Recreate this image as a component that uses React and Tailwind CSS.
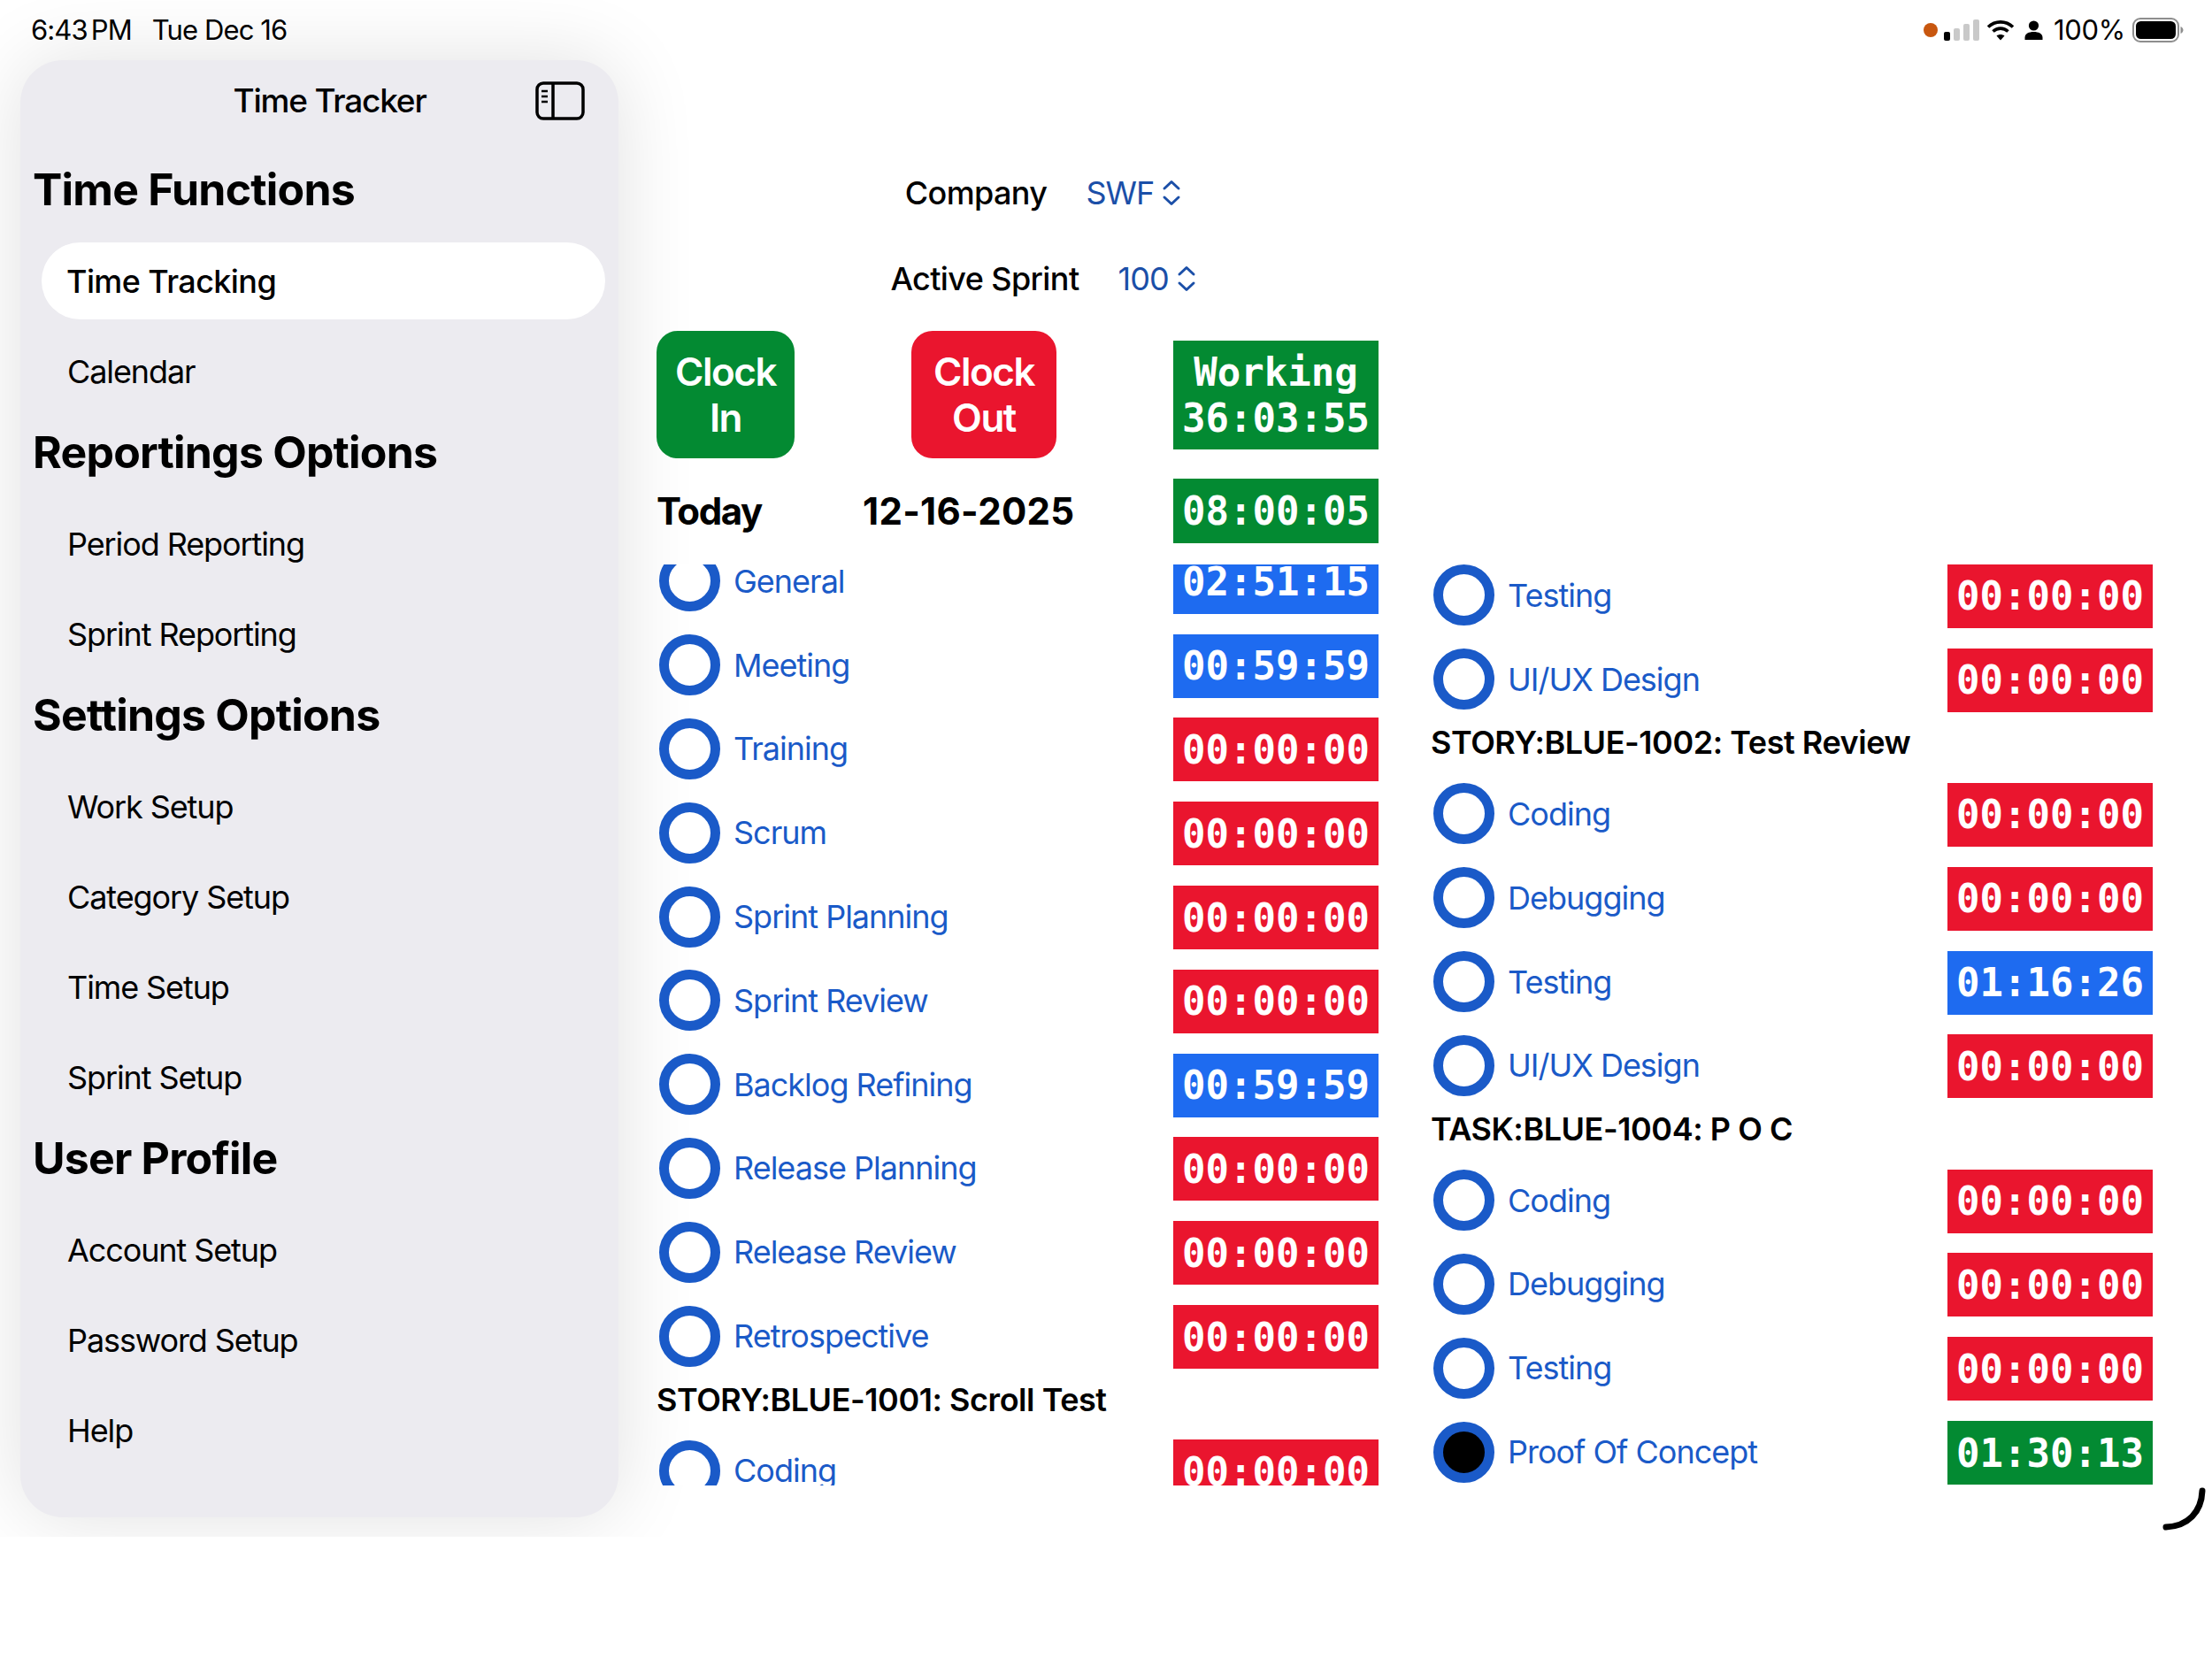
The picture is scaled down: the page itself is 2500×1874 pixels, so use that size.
const sections = [
  { title: "Time Functions", items: ["Time Tracking", "Calendar"] },
  { title: "Reportings Options", items: ["Period Reporting", "Sprint Reporting"] },
  { title: "Settings Options", items: ["Work Setup", "Category Setup", "Time Setup", "Sprint Setup"] },
  { title: "User Profile", items: ["Account Setup", "Password Setup", "Help"] },
];

const timerColors = {
  red: "bg-[#ea152e]",
  blue: "bg-[#1e6bf0]",
  green: "bg-[#038a32]",
};

const leftColumn = [
  { name: "General", time: "02:51:15", color: "blue" },
  { name: "Meeting", time: "00:59:59", color: "blue" },
  { name: "Training", time: "00:00:00", color: "red" },
  { name: "Scrum", time: "00:00:00", color: "red" },
  { name: "Sprint Planning", time: "00:00:00", color: "red" },
  { name: "Sprint Review", time: "00:00:00", color: "red" },
  { name: "Backlog Refining", time: "00:59:59", color: "blue" },
  { name: "Release Planning", time: "00:00:00", color: "red" },
  { name: "Release Review", time: "00:00:00", color: "red" },
  { name: "Retrospective", time: "00:00:00", color: "red" },
  { heading: "STORY:BLUE-1001: Scroll Test" },
  { name: "Coding", time: "00:00:00", color: "red" },
];

const rightColumn = [
  { name: "Testing", time: "00:00:00", color: "red" },
  { name: "UI/UX Design", time: "00:00:00", color: "red" },
  { heading: "STORY:BLUE-1002: Test Review" },
  { name: "Coding", time: "00:00:00", color: "red" },
  { name: "Debugging", time: "00:00:00", color: "red" },
  { name: "Testing", time: "01:16:26", color: "blue" },
  { name: "UI/UX Design", time: "00:00:00", color: "red" },
  { heading: "TASK:BLUE-1004: P O C" },
  { name: "Coding", time: "00:00:00", color: "red" },
  { name: "Debugging", time: "00:00:00", color: "red" },
  { name: "Testing", time: "00:00:00", color: "red" },
  { name: "Proof Of Concept", time: "01:30:13", color: "green", active: true },
];

function Timer({ color, className, children }) {
  return (
    <div
      className={`w-[232px] shrink-0 flex flex-col items-center justify-center pt-[1px] text-white text-[44px] leading-[52px] font-bold [font-family:'DejaVu_Sans_Mono',monospace] ${timerColors[color]} ${className}`}
    >
      {children}
    </div>
  );
}

function Row({ row }) {
  if (row.heading) {
    return (
      <div className="h-[57.5px] pb-[11px] flex items-center text-[36px] font-semibold text-black whitespace-nowrap tracking-[-0.45px]">
        {row.heading}
      </div>
    );
  }
  return (
    <div className="h-[94.8px] flex items-center justify-between">
      <div className="flex items-center gap-[15px] pl-[3px] mt-[-2px]">
        <div className={`w-[69px] h-[69px] rounded-full border-[11px] border-[#1a5ac8] ${row.active ? "bg-black" : "bg-white"}`} />
        <span className="text-[36px] text-[#1a5ac8] tracking-[-1px]">{row.name}</span>
      </div>
      <Timer color={row.color} className="h-[72px]">{row.time}</Timer>
    </div>
  );
}

function UpDown() {
  return (
    <svg width="22" height="30" viewBox="0 0 22 30" fill="none" stroke="#1b4fa8" strokeWidth="3" strokeLinecap="round" strokeLinejoin="round">
      <path d="M3 10 L11 2.5 L19 10" />
      <path d="M3 20 L11 27.5 L19 20" />
    </svg>
  );
}

function Picker({ label, value }) {
  return (
    <div className="h-[60px] flex items-center justify-center text-[36px]">
      <span className="font-medium text-black mr-[44px] tracking-[-0.6px]">{label}</span>
      <span className="text-[#1b4fa8] mr-[9px] tracking-[-1px]">{value}</span>
      <UpDown />
    </div>
  );
}

function SidebarIcon() {
  return (
    <svg width="56" height="44" viewBox="0 0 56 44" fill="none" stroke="#000">
      <rect x="2" y="2" width="52" height="40" rx="7" strokeWidth="3.5" />
      <path d="M20 2 V42" strokeWidth="3.5" />
      <path d="M7 11 H14 M7 17 H14 M7 23 H14" strokeWidth="2.5" />
    </svg>
  );
}

function StatusBar() {
  return (
    <div className="h-[68px] flex items-center justify-between pl-[35px] pr-[32px] text-[31px] text-black">
      <div className="flex items-center tracking-[-0.9px]">
        <span>6:43</span>
        <span className="ml-[4px] mr-[23px]">PM</span>
        <span>Tue Dec 16</span>
      </div>
      <div className="flex items-center">
        <div className="w-[16px] h-[16px] rounded-full bg-[#c8570f] mr-[7px]" />
        <svg width="40" height="24" viewBox="0 0 40 24" className="mr-[8px]">
          <rect x="0" y="14" width="7" height="10" rx="2" fill="#000" />
          <rect x="11" y="10" width="7" height="14" rx="2" fill="#c9c9c9" />
          <rect x="22" y="5" width="7" height="19" rx="2" fill="#c9c9c9" />
          <rect x="33" y="0" width="7" height="24" rx="2" fill="#c9c9c9" />
        </svg>
        <svg width="32" height="24" viewBox="0 0 32 24" fill="none" stroke="#000" strokeWidth="3.6" className="mr-[11px]">
          <path d="M2 8.5 C10 1 22 1 30 8.5" />
          <path d="M7.5 13.5 C12.5 9 19.5 9 24.5 13.5" />
          <path d="M16 23.5 L11.5 18.5 C14 16.5 18 16.5 20.5 18.5 Z" fill="#000" stroke="none" />
        </svg>
        <svg width="21" height="22" viewBox="0 0 21 22" fill="#000" className="mr-[12px]">
          <circle cx="10.5" cy="6" r="5.6" />
          <path d="M0.5 22 V19.5 C0.5 15 5 13 10.5 13 C16 13 20.5 15 20.5 19.5 V22 Z" />
        </svg>
        <span className="mr-[8px] tracking-[-0.3px]">100%</span>
        <svg width="58" height="28" viewBox="0 0 58 28">
          <rect x="1" y="1" width="51" height="26" rx="8" fill="none" stroke="#8e8e8e" strokeWidth="2" />
          <rect x="4" y="4" width="45" height="20" rx="5.5" fill="#000" />
          <path d="M54.5 10 C56.5 11 57.5 12.5 57.5 14 C57.5 15.5 56.5 17 54.5 18 Z" fill="#8e8e8e" />
        </svg>
      </div>
    </div>
  );
}

function Sidebar() {
  return (
    <aside className="ml-[23px] w-[676px] h-[1647px] shrink-0 rounded-[48px] bg-[#ecebf0] shadow-[0_0_90px_rgba(0,0,0,0.12)]">
      <div className="relative h-[92px] mb-[6px] flex items-center justify-center">
        <span className="ml-[23px] text-[37px] font-medium text-black tracking-[-1.2px]">Time Tracker</span>
        <div className="absolute left-[582px] top-[24px]">
          <SidebarIcon />
        </div>
      </div>
      {sections.map((section) => (
        <div key={section.title}>
          <h2 className="h-[96px] flex items-center pl-[14px] text-[50px] font-bold text-black tracking-[-0.8px]">
            {section.title}
          </h2>
          <div className="mt-[12px] flex flex-col gap-[15px]">
            {section.items.map((item) => (
              <div
                key={item}
                className={`ml-[24px] w-[637px] h-[87px] rounded-full flex items-center ${
                  item === "Time Tracking"
                    ? "bg-white pl-[28px] text-[36px] font-medium text-black tracking-[-0.6px]"
                    : "pt-[1px] pl-[29px] text-[36px] text-black tracking-[-1.1px]"
                }`}
              >
                {item}
              </div>
            ))}
          </div>
        </div>
      ))}
    </aside>
  );
}

export default function App() {
  return (
    <div className="relative h-[1737px] overflow-hidden bg-white [font-family:Inter,sans-serif]">
      <StatusBar />
      <div className="flex">
        <Sidebar />
        <main className="ml-[43px] w-[1691px]">
          <div className="w-[874px] pt-[120px]">
            <Picker label="Company" value="SWF" />
            <div className="mt-[37px]">
              <Picker label="Active Sprint" value="100" />
            </div>
          </div>
          <div className="w-[816px] mt-[29px] flex items-center">
            <button className="w-[156px] h-[144px] rounded-[24px] bg-[#038a32] text-white text-[44px] leading-[52px] font-semibold tracking-[-1.5px]">
              Clock<br />In
            </button>
            <button className="ml-[132px] w-[164px] h-[144px] rounded-[24px] bg-[#ea152e] text-white text-[44px] leading-[52px] font-semibold tracking-[-1.5px]">
              Clock<br />Out
            </button>
            <Timer color="green" className="ml-auto h-[123px]">
              <span>Working</span>
              <span>36:03:55</span>
            </Timer>
          </div>
          <div className="w-[816px] mt-[23px] flex items-center text-[42px] font-bold text-black">
            <span className="w-[233px] tracking-[-1.4px]">Today</span>
            <span className="tracking-[0.3px]">12-16-2025</span>
            <Timer color="green" className="ml-auto h-[73px]">08:00:05</Timer>
          </div>
          <div className="mt-[24px] h-[1041px] flex gap-[59px] overflow-hidden">
            <div className="w-[816px] shrink-0">
              <div className="mt-[-27.5px]">
                {leftColumn.map((row, i) => <Row key={i} row={row} />)}
              </div>
            </div>
            <div className="w-[816px] shrink-0">
              <div className="mt-[-11.5px]">
                {rightColumn.map((row, i) => <Row key={i} row={row} />)}
              </div>
            </div>
          </div>
        </main>
      </div>
      <svg width="50" height="50" viewBox="0 0 50 50" fill="none" stroke="#000" strokeWidth="7" strokeLinecap="round" className="absolute left-[2443px] top-[1681px]">
        <path d="M46 4 C45 28 30 44 5 45" />
      </svg>
    </div>
  );
}
